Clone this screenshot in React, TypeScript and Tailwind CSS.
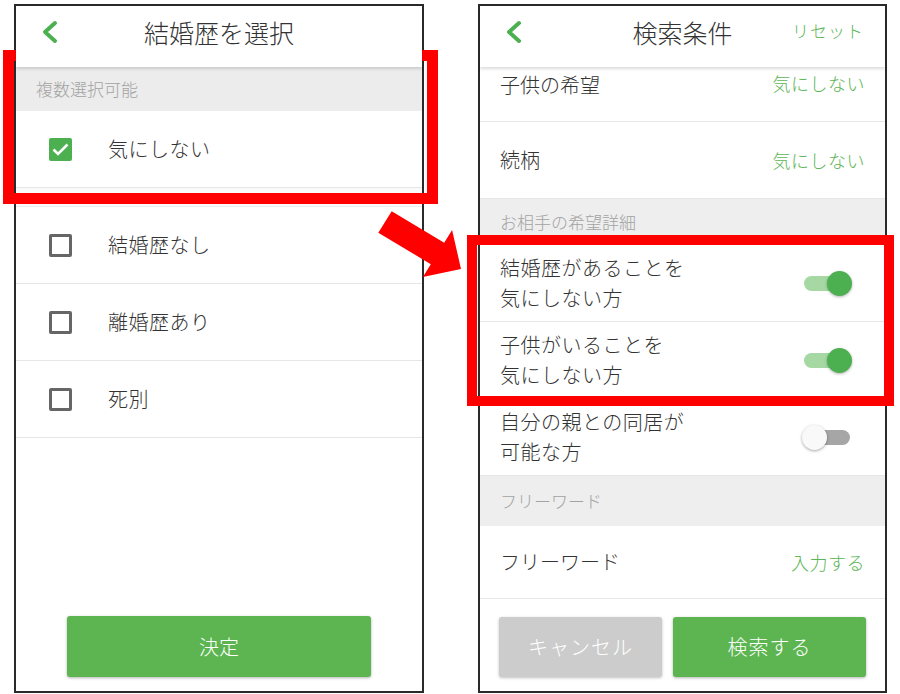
import React from 'react';

const font = { fontFamily: '"Noto Sans CJK JP", "Noto Sans", sans-serif' };

function BackChevron() {
  return (
    <svg width="18" height="24" viewBox="0 0 18 24" className="block">
      <path d="M14 3 L4 12 L14 21" fill="none" stroke="#4caf50" strokeWidth="4" strokeLinecap="round" strokeLinejoin="round" />
    </svg>
  );
}

function Header({ title, right }: { title: string; right?: string }) {
  return (
    <div className="relative z-10 h-[61px] shrink-0 flex items-center justify-center pb-[9px] bg-white shadow-[0_2px_3px_rgba(0,0,0,0.14)]">
      <div className="absolute left-[25px] top-[14px]">
        <BackChevron />
      </div>
      <span className="text-[25px] text-[#333] leading-none">{title}</span>
      {right && (
        <span className="absolute right-[21px] top-[12px] text-[17px] tracking-[1px] text-[#5cb556]">{right}</span>
      )}
    </div>
  );
}

function Checkbox({ checked }: { checked?: boolean }) {
  if (checked) {
    return (
      <div className="w-[23px] h-[23px] rounded-[2px] bg-[#4caf50] flex items-center justify-center">
        <svg width="17" height="13" viewBox="0 0 17 13">
          <path d="M1.5 6.5 L6 11 L15.5 1.5" fill="none" stroke="#fff" strokeWidth="2.6" />
        </svg>
      </div>
    );
  }
  return <div className="w-[23px] h-[23px] rounded-[2px] border-[3px] border-[#666]" />;
}

function CheckRow({ label, checked }: { label: string; checked?: boolean }) {
  return (
    <div className="h-[77px] flex items-center border-b border-[#e6e6e6] pl-[33px]">
      <Checkbox checked={checked} />
      <span className="ml-[36px] text-[20px] text-[#333] tracking-[0.5px]">{label}</span>
    </div>
  );
}

function Toggle({ on }: { on?: boolean }) {
  return (
    <div className="relative w-[48px] h-[24px] flex items-center">
      <div className={on ? 'w-[46px] h-[15px] rounded-full bg-[#a6d8a4]' : 'w-[46px] h-[15px] rounded-full bg-[#a6a6a6]'} />
      {on ? (
        <div className="absolute right-0 top-0 w-[25px] h-[25px] rounded-full bg-[#4caf50] shadow-[0_1px_3px_rgba(0,0,0,0.3)]" />
      ) : (
        <div className="absolute left-[-2px] top-0 w-[25px] h-[25px] rounded-full bg-[#f9f9f9] shadow-[0_1px_3px_rgba(0,0,0,0.35)]" />
      )}
    </div>
  );
}

function ValueRow({ label, value, h = 'h-[77px]' }: { label: string; value: string; h?: string }) {
  return (
    <div className={`${h} flex items-center justify-between border-b border-[#e6e6e6] pl-[20px] pr-[20px]`}>
      <span className="text-[20px] text-[#333]">{label}</span>
      <span className="text-[18px] text-[#5cb556] tracking-[0.5px]">{value}</span>
    </div>
  );
}

function ToggleRow({ lines, on }: { lines: string[]; on?: boolean }) {
  return (
    <div className="h-[77px] flex items-center justify-between border-b border-[#e6e6e6] pl-[20px] pr-[33px]">
      <div className="flex flex-col text-[20px] leading-[30px] text-[#333] tracking-[0.5px]">
        {lines.map((l) => (
          <span key={l}>{l}</span>
        ))}
      </div>
      <Toggle on={on} />
    </div>
  );
}

function Section({ label, h }: { label: string; h: string }) {
  return (
    <div className={`${h} flex items-center bg-[#eeeeee] pl-[20px] text-[17px] text-[#a3a3a3]`}>{label}</div>
  );
}

function LeftPhone() {
  return (
    <div className="w-[410px] h-[689px] border-2 border-[#2a2a2a] flex flex-col bg-white">
      <Header title="結婚歴を選択" />
      <div className="h-[44px] flex items-center bg-[#ececec] pl-[20px] text-[17px] text-[#a3a3a3]">複数選択可能</div>
      <CheckRow label="気にしない" checked />
      <div className="h-[19px] bg-[#fafafa] border-b border-[#ececec]" />
      <CheckRow label="結婚歴なし" />
      <CheckRow label="離婚歴あり" />
      <CheckRow label="死別" />
      <div className="flex-1" />
      <div className="px-[51px] pb-[14px]">
        <div className="h-[61px] rounded-[3px] bg-[#5cb551] shadow-[0_1px_3px_rgba(0,0,0,0.3)] flex items-center justify-center text-[20px] text-white">
          決定
        </div>
      </div>
    </div>
  );
}

function RightPhone() {
  return (
    <div className="w-[409px] h-[689px] border-2 border-[#2a2a2a] flex flex-col bg-white">
      <Header title="検索条件" right="リセット" />
      <div className="h-[55px] flex items-start justify-between border-b border-[#e6e6e6] px-[20px] pt-[3px]">
        <span className="text-[20px] text-[#333]">子供の希望</span>
        <span className="text-[18px] text-[#5cb556] tracking-[0.5px]">気にしない</span>
      </div>
      <ValueRow label="続柄" value="気にしない" />
      <Section label="お相手の希望詳細" h="h-[46px]" />
      <ToggleRow lines={['結婚歴があることを', '気にしない方']} on />
      <ToggleRow lines={['子供がいることを', '気にしない方']} on />
      <ToggleRow lines={['自分の親との同居が', '可能な方']} />
      <Section label="フリーワード" h="h-[50px]" />
      <ValueRow label="フリーワード" value="入力する" h="h-[73px]" />
      <div className="flex-1 flex items-start gap-[11px] px-[19px] pt-[18px]">
        <div className="w-[163px] h-[60px] rounded-[3px] bg-[#cccccc] shadow-[0_1px_3px_rgba(0,0,0,0.25)] flex items-center justify-center text-[20px] text-white tracking-[1px]">
          キャンセル
        </div>
        <div className="flex-1 h-[60px] rounded-[3px] bg-[#5cb551] shadow-[0_1px_3px_rgba(0,0,0,0.3)] flex items-center justify-center text-[20px] text-white tracking-[1px]">
          検索する
        </div>
      </div>
    </div>
  );
}

export default function App() {
  return (
    <div className="relative w-[900px] h-[694px] bg-white overflow-hidden font-light" style={font}>
      <div className="flex items-start gap-[54px] pl-[14px] pt-[4px]">
        <LeftPhone />
        <RightPhone />
      </div>

      {/* red highlight boxes + arrow drawn over the screenshots */}
      <div className="absolute left-[3px] top-[50px] w-[435px] h-[154px] border-[11px] border-[#ff0000]" />
      <div className="absolute left-[467px] top-[235px] w-[427px] h-[171px] border-[10px] border-[#ff0000]" />
      <svg className="absolute left-0 top-0" width="900" height="694">
        <polygon
          points="391.7,211.3 444.2,242.8 452.1,230 461,269 422.9,277 430.8,264.2 378.3,232.7"
          fill="#ff0000"
        />
      </svg>
    </div>
  );
}
